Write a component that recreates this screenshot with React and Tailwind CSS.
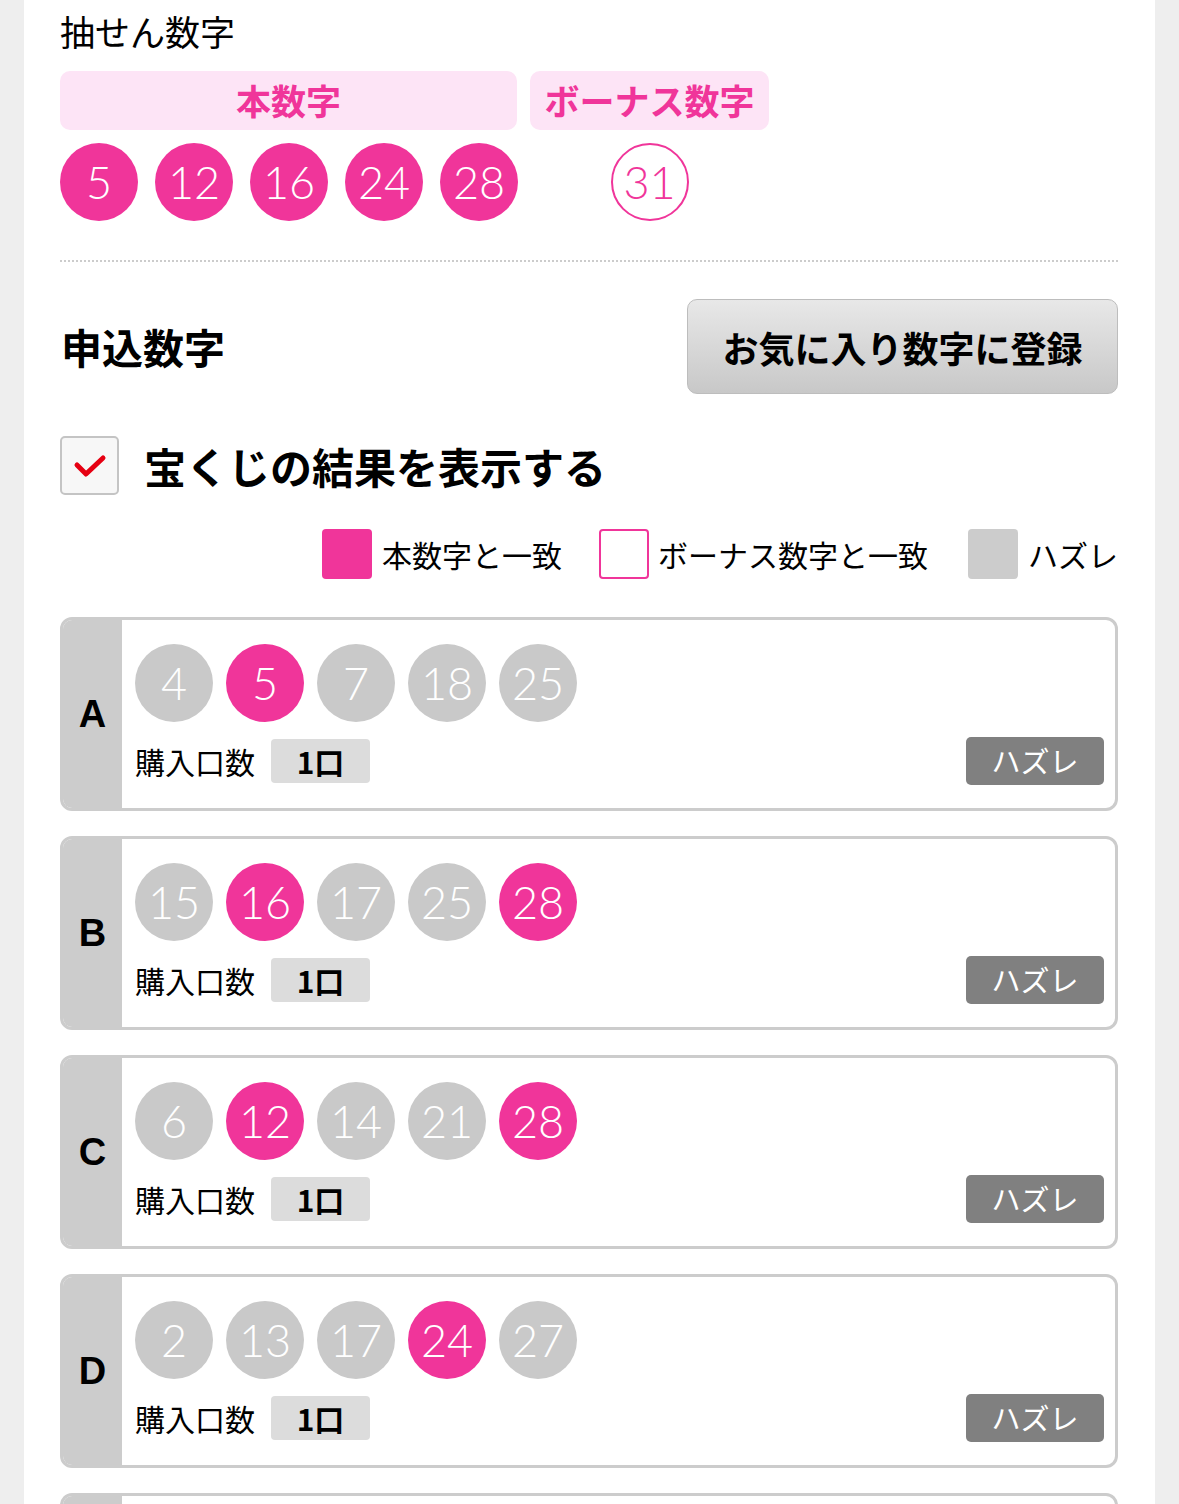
import { Fragment } from 'react';

const JP = { fontFamily: '"Noto Sans CJK JP", "Noto Sans", sans-serif' };
const NUM = { fontFamily: 'Lato, "Noto Sans", sans-serif' };

const WIN = [5, 12, 16, 24, 28];
const BONUS = 31;

const LINES = [
  { id: 'A', nums: [4, 5, 7, 18, 25] },
  { id: 'B', nums: [15, 16, 17, 25, 28] },
  { id: 'C', nums: [6, 12, 14, 21, 28] },
  { id: 'D', nums: [2, 13, 17, 24, 27] },
  { id: 'E', nums: [1, 3, 9, 11, 20] },
];

function Ball({ n, kind }) {
  const cls =
    kind === 'main'
      ? 'bg-[#f0359a] text-white'
      : kind === 'bonus'
      ? 'border-2 border-[#f0359a] text-[#f0359a] bg-white'
      : 'bg-[#c9c9c9] text-white';
  return (
    <div
      className={`w-[78px] h-[78px] rounded-full flex items-center justify-center text-[45px] font-light leading-none shrink-0 ${cls}`}
      style={NUM}
    >
      {n}
    </div>
  );
}

function LineCard({ line }) {
  return (
    <div className="flex border-[3px] border-[#cccccc] rounded-[12px] overflow-hidden h-[194px] shrink-0">
      <div
        className="w-[59px] bg-[#cccccc] flex items-center justify-center text-[38px] font-bold text-black"
        style={{ fontFamily: '"Liberation Sans", Arial, sans-serif' }}
      >
        {line.id}
      </div>
      <div className="flex-1 flex flex-col pl-[13px] pr-[11px] pt-[24px]">
        <div className="flex gap-[13px]">
          {line.nums.map((n) => (
            <Ball key={n} n={n} kind={WIN.includes(n) ? 'main' : 'off'} />
          ))}
        </div>
        <div className="flex items-center mt-[15px]">
          <span className="text-[30px] text-black" style={JP}>購入口数</span>
          <span
            className="ml-[16px] w-[99px] h-[44px] rounded-[4px] bg-[#dcdcdc] flex items-center justify-center text-[30px] font-bold text-black"
            style={JP}
          >
            1口
          </span>
          <span
            className="ml-auto w-[138px] h-[48px] rounded-[5px] bg-[#808080] flex items-center justify-center text-[29px] text-white"
            style={JP}
          >
            ハズレ
          </span>
        </div>
      </div>
    </div>
  );
}

export default function App() {
  return (
    <div className="bg-[#eeeeee] w-[1179px] h-[1504px] overflow-hidden flex">
      <div className="ml-[24px] w-[1131px] bg-white px-[36px] pt-[8px] flex flex-col">
        <div className="text-[35px] text-black leading-[46px]" style={JP}>抽せん数字</div>

        <div className="flex gap-[13px] mt-[17px]">
          <div
            className="w-[457px] h-[59px] rounded-[10px] bg-[#fde4f6] text-[#f0359a] text-[35px] font-bold flex items-center justify-center"
            style={JP}
          >
            本数字
          </div>
          <div
            className="w-[239px] h-[59px] rounded-[10px] bg-[#fde4f6] text-[#f0359a] text-[35px] font-bold flex items-center justify-center"
            style={JP}
          >
            ボーナス数字
          </div>
        </div>

        <div className="flex mt-[13px]">
          <div className="w-[457px] flex gap-[17px]">
            {WIN.map((n) => (
              <Ball key={n} n={n} kind="main" />
            ))}
          </div>
          <div className="ml-[13px] w-[239px] flex justify-center">
            <Ball n={BONUS} kind="bonus" />
          </div>
        </div>

        <div className="mt-[39px] w-[1058px] border-t-2 border-dotted border-[#cccccc]" />

        <div className="flex items-center justify-between w-[1058px] mt-[37px]">
          <div className="text-[41px] font-bold text-black ml-[1px]" style={JP}>申込数字</div>
          <button
            className="w-[431px] h-[95px] rounded-[10px] border border-[#bdbdbd] bg-gradient-to-b from-[#e8e8e8] to-[#c8c8c8] text-[36px] font-bold text-black flex items-center justify-center"
            style={JP}
          >
            お気に入り数字に登録
          </button>
        </div>

        <div className="flex items-center mt-[42px]">
          <div className="w-[59px] h-[59px] rounded-[5px] border-2 border-[#c4c4c4] bg-[#f7f7f7] flex items-center justify-center">
            <svg width="34" height="26" viewBox="0 0 34 26" fill="none">
              <path d="M4 12 L13 21 L30 5" stroke="#e60012" strokeWidth="5" strokeLinecap="round" strokeLinejoin="round" />
            </svg>
          </div>
          <div className="ml-[25px] text-[42px] leading-none font-bold text-black" style={JP}>宝くじの結果を表示する</div>
        </div>

        <div className="flex items-center justify-end w-[1058px] mt-[34px] text-[30px] text-black" style={JP}>
          <span className="w-[50px] h-[50px] rounded-[4px] bg-[#f0359a]" />
          <span className="ml-[10px]">本数字と一致</span>
          <span className="ml-[37px] w-[50px] h-[50px] rounded-[4px] border-2 border-[#f0359a] bg-white" />
          <span className="ml-[9px]">ボーナス数字と一致</span>
          <span className="ml-[40px] w-[50px] h-[50px] rounded-[4px] bg-[#cccccc]" />
          <span className="ml-[10px]">ハズレ</span>
        </div>

        <div className="flex flex-col gap-[25px] w-[1058px] mt-[38px]">
          {LINES.map((line) => (
            <Fragment key={line.id}>
              <LineCard line={line} />
            </Fragment>
          ))}
        </div>
      </div>
    </div>
  );
}
